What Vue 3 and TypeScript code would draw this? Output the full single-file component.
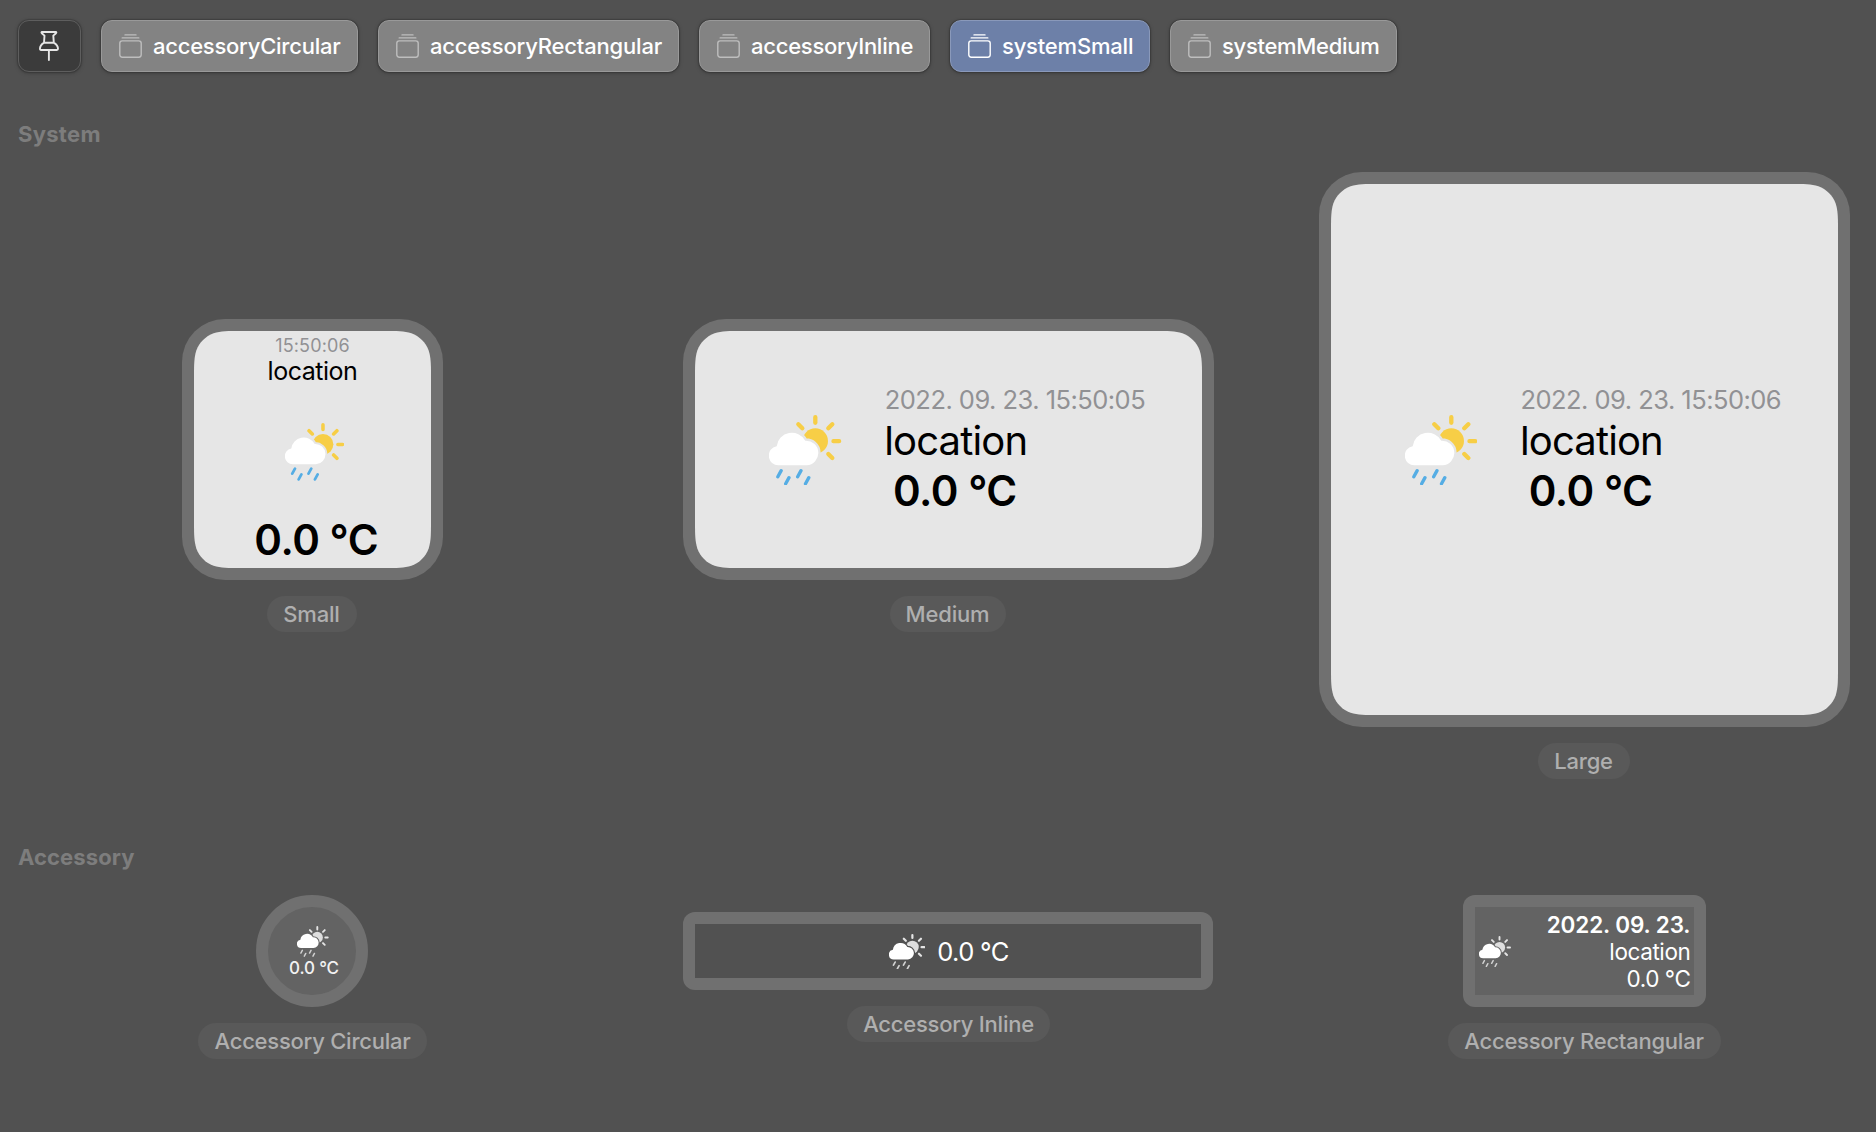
<script setup lang="ts">
import { defineComponent, h } from 'vue'

interface Tab { name: string; width: number; spacing: number; active?: boolean }

const tabs: Tab[] = [
  { name: 'accessoryCircular', width: 257, spacing: -0.24 },
  { name: 'accessoryRectangular', width: 301, spacing: -0.18 },
  { name: 'accessoryInline', width: 231, spacing: -0.25 },
  { name: 'systemSmall', width: 200, spacing: -0.2, active: true },
  { name: 'systemMedium', width: 227, spacing: -0.3 },
]

// Continuous ("squircle") rounded rectangle, as used by system widgets.
function continuousRect(w: number, hgt: number, r: number): string {
  const a = 1.528665 * r, b = 1.088493 * r, c = 0.868407 * r
  const d = 0.631494 * r, e = 0.074911 * r, f = 0.372824 * r, g = 0.16906 * r
  return `path("M${a} 0H${w - a}C${w - b} 0 ${w - c} 0 ${w - d} ${e}C${w - f} ${g} ${w - g} ${f} ${w - e} ${d}C${w} ${c} ${w} ${b} ${w} ${a}` +
    `V${hgt - a}C${w} ${hgt - b} ${w} ${hgt - c} ${w - e} ${hgt - d}C${w - g} ${hgt - f} ${w - f} ${hgt - g} ${w - d} ${hgt - e}C${w - c} ${hgt} ${w - b} ${hgt} ${w - a} ${hgt}` +
    `H${a}C${b} ${hgt} ${c} ${hgt} ${d} ${hgt - e}C${f} ${hgt - g} ${g} ${hgt - f} ${e} ${hgt - d}C0 ${hgt - c} 0 ${hgt - b} 0 ${hgt - a}` +
    `V${a}C0 ${b} 0 ${c} ${e} ${d}C${g} ${f} ${f} ${g} ${d} ${e}C${c} 0 ${b} 0 ${a} 0Z")`
}

const cloud = 'M87 195A29 29 0 0 1 81 137.5A46 46 0 0 1 167 121A37 37 0 1 1 171 195Z'
let maskCount = 0

const CloudSunRain = defineComponent({
  props: { width: { type: Number, required: true }, mono: Boolean },
  setup(props) {
    const id = `cloud-gap-${maskCount++}`
    return () => {
      const sun = props.mono ? '#dedede' : '#f7ce46'
      const ray = props.mono ? '#e4e4e4' : '#f7ce46'
      const rain = props.mono ? '#d2d2d2' : '#55ade4'
      return h('svg', { width: props.width, height: props.width * 211 / 217, viewBox: '58 44 217 211', style: 'display:block;flex:none' }, [
        h('mask', { id, maskUnits: 'userSpaceOnUse', x: 50, y: 40, width: 230, height: 220 }, [
          h('rect', { x: 50, y: 40, width: 230, height: 220, fill: '#fff' }),
          h('path', { d: cloud, fill: '#000', stroke: '#000', 'stroke-width': 14 }),
        ]),
        h('circle', { cx: 197, cy: 122, r: 38, fill: sun, mask: `url(#${id})` }),
        h('path', { d: 'M197 50.5V67.5M251.5 122.5H268.5M236 84L248 72M236 161L248 173M146 72L158 84', stroke: ray, 'stroke-width': 13, 'stroke-linecap': 'round', fill: 'none' }),
        h('path', { d: cloud, fill: '#fff' }),
        h('path', { d: 'M94.5 211L84.5 229.5M118 232L108 250.5M154 211L144 229.5M177.5 232L167.5 250.5', stroke: rain, 'stroke-width': 10, 'stroke-linecap': 'round', fill: 'none' }),
      ])
    }
  },
})
</script>

<template>
  <main class="gallery">
    <header class="toolbar">
      <button class="btn pin" aria-label="Pin">
        <svg width="20" height="30" viewBox="0 0 20 30" fill="none" stroke="#e6e6e6" stroke-width="1.9" stroke-linejoin="round" stroke-linecap="round">
          <path d="M3 .95H16.8Q17.8 1.4 17 2.2L14.3 4.6L14.8 11.6Q19 14.2 19 17.8Q19 19 17.8 19H2Q.95 19 .95 17.8Q.95 14.2 5 11.6L5.5 4.6L2.8 2.2Q2 1.4 3 .95ZM5.6 11.7H14.2M9.9 19V29" />
        </svg>
      </button>
      <button v-for="t in tabs" :key="t.name" class="btn tab" :class="{ active: t.active }" :style="{ width: t.width + 'px', letterSpacing: t.spacing + 'px' }">
        <svg class="stack" width="23" height="24" viewBox="0 0 23 24" fill="none" stroke="currentColor" stroke-width="1.4" stroke-linecap="round">
          <rect x=".8" y="6.9" width="21.4" height="16.3" rx="2.4" />
          <path d="M3.2 3.9H19.8M6 .9H17" />
        </svg>
        <span>{{ t.name }}</span>
      </button>
    </header>

    <h2 class="title system-title">System</h2>
    <section class="row">
      <div class="item">
        <div class="frame">
          <div class="face small" :style="{ clipPath: continuousRect(237, 237, 31) }">
            <div class="time">15:50:06</div>
            <div class="place">location</div>
            <CloudSunRain class="small-icon" :width="59.3" />
            <div class="temp">0.0 °C</div>
          </div>
        </div>
        <div class="pill">Small</div>
      </div>
      <div class="item">
        <div class="frame">
          <div class="face wide medium" :style="{ clipPath: continuousRect(507, 237, 31) }">
            <CloudSunRain class="wide-icon" :width="72.3" />
            <div class="info">
              <div class="date">2022. 09. 23. 15:50:05</div>
              <div class="place">location</div>
              <div class="temp">0.0 °C</div>
            </div>
          </div>
        </div>
        <div class="pill">Medium</div>
      </div>
      <div class="item">
        <div class="frame">
          <div class="face wide large" :style="{ clipPath: continuousRect(507, 531, 31) }">
            <CloudSunRain class="wide-icon" :width="72.3" />
            <div class="info">
              <div class="date">2022. 09. 23. 15:50:06</div>
              <div class="place">location</div>
              <div class="temp">0.0 °C</div>
            </div>
          </div>
        </div>
        <div class="pill">Large</div>
      </div>
    </section>

    <h2 class="title accessory-title">Accessory</h2>
    <section class="row">
      <div class="item shifted">
        <div class="circular">
          <CloudSunRain :width="31.7" mono />
          <span>0.0 °C</span>
        </div>
        <div class="pill long">Accessory Circular</div>
      </div>
      <div class="item shifted">
        <div class="inline">
          <CloudSunRain :width="36.5" mono />
          <span>0.0 °C</span>
        </div>
        <div class="pill long">Accessory Inline</div>
      </div>
      <div class="item">
        <div class="rectangular">
          <CloudSunRain :width="32" mono />
          <div class="lines">
            <div class="strong">2022. 09. 23.</div>
            <div>location</div>
            <div class="deg">0.0 °C</div>
          </div>
        </div>
        <div class="pill long">Accessory Rectangular</div>
      </div>
    </section>
  </main>
</template>

<style>
body { margin: 0; background: #515151; }
</style>

<style scoped>
.gallery {
  box-sizing: border-box;
  width: 1876px;
  height: 1132px;
  padding-top: 20px;
  overflow: hidden;
  background: #515151;
  font-family: Inter, "Noto Sans", sans-serif;
  white-space: nowrap;
}
.toolbar { display: flex; gap: 20px; padding-left: 18px; }
.btn {
  box-sizing: border-box;
  height: 52px;
  display: flex;
  align-items: center;
  padding: 0;
  border: 1px solid #999;
  border-radius: 11px;
  background: #838383;
  color: #fff;
  font: 500 22px/28px Inter, "Noto Sans", sans-serif;
  box-shadow: 0 0 1px 1px rgba(0, 0, 0, .16), 0 1px 4px rgba(0, 0, 0, .26);
}
.pin { width: 63px; justify-content: center; padding-right: 1.5px; background: #3b3b3b; border-color: #5e5e5e; }
.tab { padding-left: 17px; gap: 11px; }
.stack { flex: none; color: #bebebe; }
.active { background: #6d80a8; border-color: #8a99ba; }
.active .stack { color: #fff; }

.title {
  margin: 0;
  padding-left: 18px;
  font-size: 22px;
  line-height: 28px;
  font-weight: 700;
  color: #7d7d7d;
}
.system-title { margin-top: 48px; letter-spacing: 0.3px; }
.accessory-title { margin-top: 64px; letter-spacing: 0.1px; }
.row {
  display: grid;
  grid-template-columns: repeat(3, 531px);
  column-gap: 105px;
  align-items: center;
  padding-left: 47px;
  margin-top: 24px;
}
.item { display: flex; flex-direction: column; align-items: center; }
.shifted { width: 530px; }
.frame { padding: 12px; border-radius: 43px; background: #707070; }
.face { box-sizing: border-box; background: #e6e6e6; color: #000; display: flex; }
.pill {
  margin-top: 16px;
  margin-right: 1px;
  height: 36px;
  padding: 0 17px 0 16px;
  border-radius: 18px;
  background: #595959;
  color: #afafaf;
  font-size: 22px;
  font-weight: 500;
  line-height: 36px;
  letter-spacing: -0.18px;
}
.long { letter-spacing: -0.24px; margin-right: 0; }
.shifted .pill { margin-right: -1.5px; padding-right: 16.5px; }

.small { width: 237px; height: 237px; padding-top: 3px; flex-direction: column; align-items: center; }
.time { font-size: 18px; line-height: 23px; color: #919194; letter-spacing: 0.15px; }
.small .place { font-size: 25px; line-height: 29px; letter-spacing: -0.48px; }
.small-icon { margin: 37px 0 34.5px 4px; }
.temp { font-size: 42px; line-height: 50px; font-weight: 600; letter-spacing: -0.45px; }
.small .temp { margin-left: 7.5px; }

.wide { width: 507px; align-items: center; padding-left: 74.3px; gap: 43.7px; }
.wide-icon { margin-top: 1px; }
.medium { height: 237px; }
.large { height: 531px; }
.date { font-size: 25.5px; line-height: 32.5px; color: #919194; letter-spacing: -0.53px; margin-left: -0.5px; }
.wide .place { font-size: 40px; line-height: 49px; letter-spacing: -0.86px; margin-left: -1px; }
.wide .temp { margin-left: 7.7px; line-height: 51px; }
.large { padding-left: 74px; }
.info { margin-top: 1px; }

.circular {
  box-sizing: border-box;
  width: 112px;
  height: 112px;
  border: 12px solid #707070;
  border-radius: 50%;
  background: #636363;
  padding: 19px 0 0 2px;
  display: flex;
  flex-direction: column;
  align-items: center;
  color: #f2f2f2;
}
.circular span { font-size: 17px; line-height: 23px; font-weight: 500; letter-spacing: -0.15px; margin-left: 2px; }
.inline {
  box-sizing: border-box;
  width: 530px;
  height: 78px;
  padding: 12px;
  border-radius: 12px;
  background: linear-gradient(#515151, #515151) content-box, #707070;
  display: flex;
  align-items: center;
  justify-content: center;
  gap: 12px;
  color: #fff;
}
.inline > svg { margin: 1px 0 0 1.5px; }
.inline span { font-size: 25.5px; line-height: 33px; letter-spacing: -0.68px; }
.rectangular {
  box-sizing: border-box;
  width: 243px;
  height: 112px;
  padding: 12px;
  border-radius: 12px;
  background: linear-gradient(#636363, #636363) content-box, #707070;
  display: flex;
  align-items: center;
  justify-content: space-between;
  color: #fff;
}
.rectangular > svg { margin: 1px 0 0 4px; }
.lines { margin: 1px 3.6px 0 0; text-align: right; font-size: 22.5px; line-height: 27.3px; letter-spacing: -0.4px; }
.strong { font-weight: 600; letter-spacing: -0.12px; }
.deg { letter-spacing: -0.45px; }
</style>
